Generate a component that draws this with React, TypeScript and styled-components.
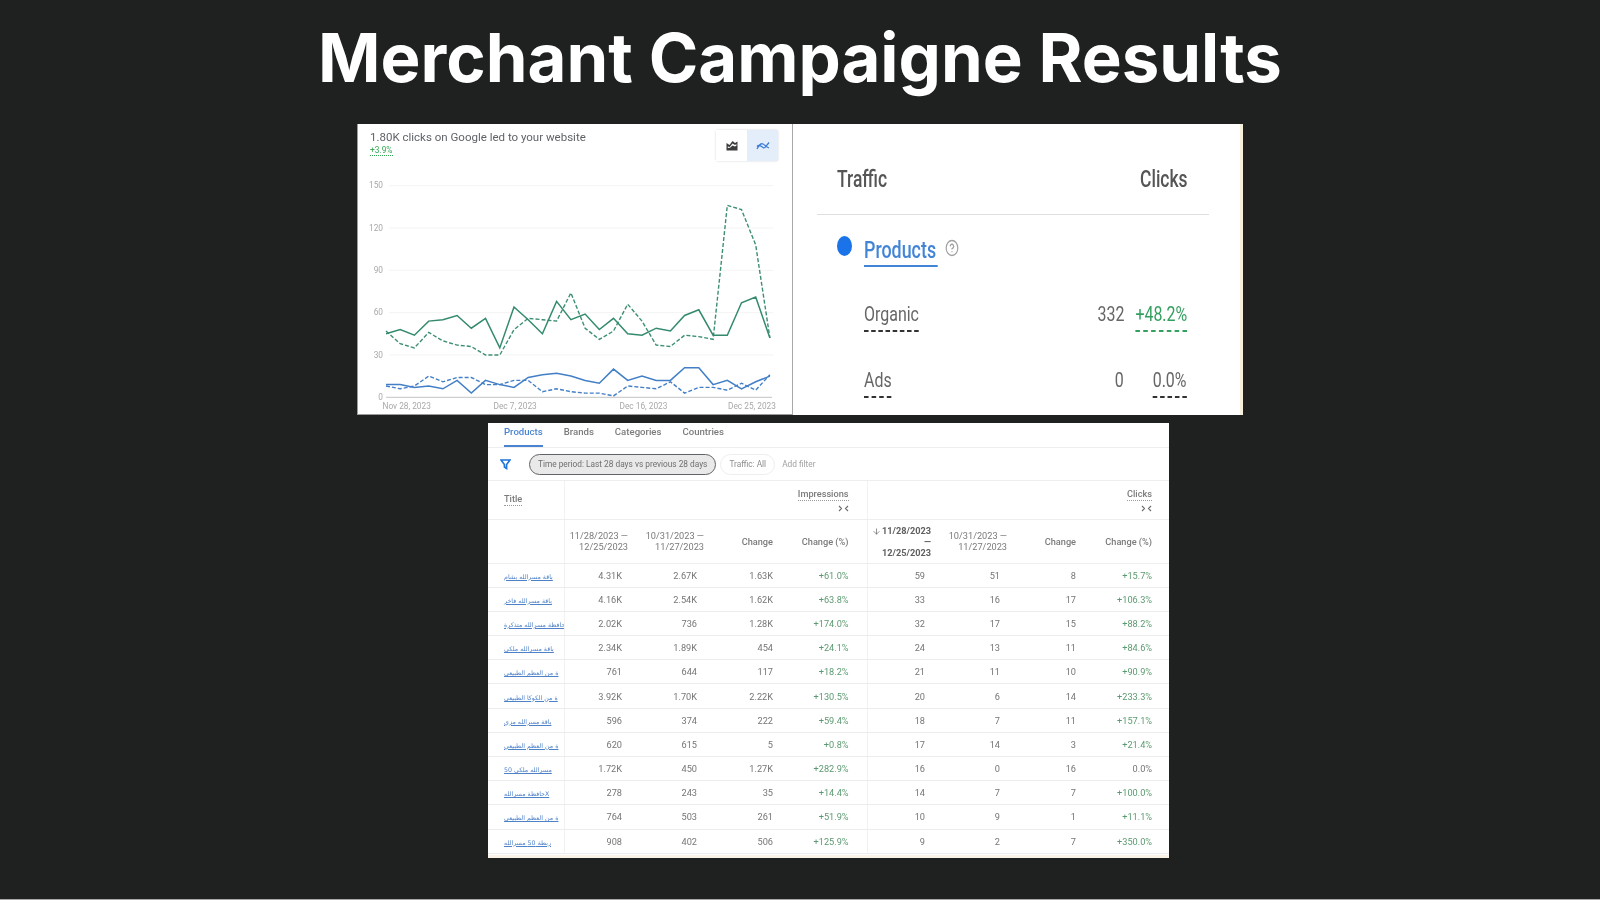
import styled, { createGlobalStyle } from "styled-components"
import { ArrowDown, CircleHelp } from "lucide-react"

const GlobalStyle = createGlobalStyle`
  html, body {
    margin: 0;
    padding: 0;
    background: #1f2121;
  }
`

const Page = styled.div`
  width: 1600px;
  height: 900px;
  box-sizing: border-box;
  overflow: hidden;
  display: flex;
  flex-direction: column;
  align-items: center;
  background: #1f2121;
  border-bottom: 1px solid #a9a9a9;
  font-family: Roboto, "Liberation Sans", sans-serif;
`

const Heading = styled.h1`
  margin: 0;
  height: 124px;
  line-height: 116px;
  font-family: Inter, "Liberation Sans", sans-serif;
  font-size: 67.100px;
  font-weight: 700;
  color: #ffffff;
  white-space: nowrap;
`

const TopRow = styled.div`
  display: flex;
  width: 886px;
  height: 291px;
  flex: none;
  filter: blur(0.35px);
`

const ChartPanel = styled.section`
  width: 436px;
  flex: none;
  box-sizing: border-box;
  background: #ffffff;
  border-left: 1px solid #9b9b9b;
  border-right: 1px solid #a8a8a8;
  border-bottom: 1px solid #9b9b9b;
  display: flex;
  flex-direction: column;
`

const ChartHeader = styled.header`
  height: 42px;
  box-sizing: border-box;
  flex: none;
  display: flex;
  justify-content: space-between;
  padding: 6px 14px 0 12px;
`

const ChartTitle = styled.div`
  font-size: 11.500px;
  line-height: 14px;
  color: #5f6368;
  white-space: nowrap;
`

const ChartDelta = styled.span`
  display: block;
  width: fit-content;
  margin-top: 1px;
  font-size: 8.400px;
  line-height: 10px;
  color: #34a853;
  border-bottom: 1px dotted #34a853;
`

const Toggle = styled.div`
  display: flex;
  height: 31px;
  border-radius: 2px;
  box-shadow: 0 0 2px rgba(0, 0, 0, 0.22);
`

const ToggleCell = styled.div<{ $active?: boolean }>`
  width: 31px;
  display: flex;
  align-items: center;
  justify-content: center;
  background: ${(props) => (props.$active ? "#e4eefa" : "#ffffff")};
`

const ChartSvg = styled.svg`
  display: block;
  flex: none;
`

const AxisLabel = styled.text`
  font-family: Roboto, "Liberation Sans", sans-serif;
  font-size: 8.300px;
  fill: #a8a8a8;
`

const TrafficPanel = styled.section`
  width: 450px;
  flex: none;
  box-sizing: border-box;
  overflow: hidden;
  background: #ffffff;
  border-right: 3px solid #f6f0dc;
  padding: 36px 31px 0 24px;
`

const Squeezed = styled.span<{ $right?: boolean }>`
  display: inline-block;
  margin-left: ${(props) => (props.$right ? "-30px" : "0")};
  transform: scaleX(0.76);
  transform-origin: ${(props) => (props.$right ? "right" : "left")} center;
  white-space: nowrap;
`

const TrafficHead = styled.div`
  display: flex;
  justify-content: space-between;
  height: 55px;
  box-sizing: border-box;
  padding: 6px 21px 0 20px;
  border-bottom: 1px solid #dfdfdf;
  font-size: 23px;
  line-height: 27px;
  font-weight: 500;
  color: #555555;
`

const ProductRow = styled.div`
  display: flex;
  align-items: flex-start;
  height: 66px;
  padding: 20px 0 0 20px;
`

const Dot = styled.span`
  flex: none;
  width: 15px;
  height: 20px;
  margin-top: 1px;
  border-radius: 50%;
  background: #1a73e8;
`

const ProductLink = styled(Squeezed)`
  margin: 2px 0 0 12px;
  width: 97px;
  font-size: 23.500px;
  line-height: 27px;
  font-weight: 500;
  color: #4285d6;
  border-bottom: 2px solid #4285d6;
  padding-bottom: 1px;
`

const HelpIcon = styled(CircleHelp)`
  margin: 4px 0 0 -16px;
  color: #a0a0a0;
`

const TrafficRow = styled.div`
  display: grid;
  grid-template-columns: 1fr 64px 63px;
  height: 66px;
  padding: 0 22px 0 47px;
  font-size: 21px;
  line-height: 27px;
  color: #666666;
`

const ValueCell = styled.div<{ $green?: boolean }>`
  text-align: right;
  color: ${(props) => (props.$green ? "#34a060" : "#666666")};
`

const Dashed = styled(Squeezed)<{ $green?: boolean }>`
  border-bottom: 2px dashed ${(props) => (props.$green ? "#34a060" : "#333333")};
  padding-bottom: 2px;
`

const TablePanel = styled.section`
  width: 681px;
  height: 435px;
  flex: none;
  align-self: flex-start;
  margin: 8px 0 0 488px;
  box-sizing: border-box;
  overflow: hidden;
  background: #ffffff;
  border-bottom: 3px solid #fcf3e8;
  filter: blur(0.35px);
`

const Tabs = styled.nav`
  height: 24px;
  display: flex;
  gap: 21px;
  padding-left: 16px;
  border-bottom: 1px solid #eeeeee;
`

const Tab = styled.span<{ $active?: boolean }>`
  font-size: 9.600px;
  font-weight: 500;
  line-height: 18px;
  color: ${(props) => (props.$active ? "#4a84d0" : "#7b7b7b")};
  box-shadow: ${(props) => (props.$active ? "inset 0 -2px 0 #4a84d0" : "none")};
`

const FilterRow = styled.div`
  height: 32px;
  display: flex;
  align-items: center;
  padding-left: 12px;
  border-bottom: 1px solid #eeeeee;
  font-size: 8.300px;
  white-space: nowrap;
`

const Chip = styled.span<{ $selected?: boolean }>`
  box-sizing: border-box;
  height: 21px;
  line-height: 19px;
  margin-right: 4px;
  padding: 0 8px;
  border-radius: 11px;
  border: 1px solid ${(props) => (props.$selected ? "#5f6368" : "#eeeeee")};
  background: ${(props) => (props.$selected ? "#e9e9e9" : "#ffffff")};
  color: ${(props) => (props.$selected ? "#6f6f6f" : "#8c8c8c")};
`

const FunnelIcon = styled.svg`
  margin-right: 18px;
  flex: none;
`

const AddFilter = styled.span`
  margin-left: 3px;
  color: #a0a0a0;
`

const Table = styled.table`
  width: 681px;
  table-layout: fixed;
  border-collapse: collapse;
  font-size: 9.200px;
  color: #757575;
`

const HeadCell = styled.th<{ $pad?: number; $divider?: boolean; $dark?: boolean }>`
  position: relative;
  box-sizing: border-box;
  padding: 0 ${(props) => props.$pad ?? 0}px 0 0;
  text-align: right;
  font-weight: ${(props) => (props.$dark ? 700 : 500)};
  line-height: 11px;
  color: ${(props) => (props.$dark ? "#5f5f5f" : "#7a7a7a")};
  border-bottom: 1px solid #eeeeee;
  border-left: ${(props) => (props.$divider ? "1px solid #f1f1f1" : "none")};
  white-space: nowrap;
`

const TitleHead = styled(HeadCell)`
  padding-left: 16px;
  text-align: left;
  border-left: none;
`

const DateCell = styled(HeadCell)`
  font-weight: 400;
`

const GroupRow = styled.tr`
  height: 38px;
`

const ColumnRow = styled.tr`
  height: 44px;
`

const BodyRow = styled.tr`
  height: 24.200px;
`

const DataCell = styled.td<{ $pad?: number; $divider?: boolean; $green?: boolean }>`
  box-sizing: border-box;
  padding: 0 ${(props) => props.$pad ?? 0}px 0 0;
  text-align: right;
  line-height: 11px;
  color: ${(props) => (props.$green ? "#5b9a70" : "#757575")};
  border-bottom: 1px solid #ececec;
  border-left: ${(props) => (props.$divider ? "1px solid #f1f1f1" : "none")};
  white-space: nowrap;
`

const TitleCell = styled.td`
  box-sizing: border-box;
  padding: 0 0 0 16px;
  border-bottom: 1px solid #ececec;
  overflow: hidden;
  white-space: nowrap;
`

const ProductName = styled.a`
  font-family: "DejaVu Sans", "Noto Sans", sans-serif;
  font-size: 6.300px;
  color: #4d82c8;
  text-decoration: underline;
`

const DottedLabel = styled.span`
  display: inline-block;
  line-height: 10px;
  padding-bottom: 1px;
  border-bottom: 1px dotted #9a9a9a;
`

const Collapse = styled.svg`
  display: block;
  margin: 4px 0 0 auto;
`

const SortArrow = styled(ArrowDown)`
  position: absolute;
  left: 4px;
  top: 7px;
  color: #6f6f6f;
`

const greenSolid = [45, 48, 44, 54, 55, 58, 49, 56, 35, 64, 55, 45, 68, 55, 59, 48, 56, 45, 44, 49, 47, 58, 62, 44, 44, 67, 71, 42]
const greenDashed = [47, 38, 35, 46, 40, 37, 36, 30, 30, 48, 56, 55, 54, 74, 49, 41, 47, 66, 54, 37, 36, 44, 43, 41, 136, 133, 108, 42]
const blueSolid = [9, 9, 7, 8, 6, 12, 3, 12, 9, 7, 14, 16, 17, 15, 12, 10, 20, 12, 15, 12, 12, 21, 21, 9, 12, 6, 11, 15]
const blueDashed = [8, 6, 8, 15, 11, 14, 14, 9, 9, 12, 12, 4, 6, 4, 3, 3, 1, 8, 7, 6, 11, 3, 7, 7, 5, 10, 5, 16]

const toPoints = (values: number[]) =>
  values.map((v, i) => `${(28 + i * 14.22).toFixed(1)},${(231.3 - v * 1.411).toFixed(1)}`).join(" ")

const rows = [
  ["باقة مسرالله بشام", "4.31K", "2.67K", "1.63K", "+61.0%", "59", "51", "8", "+15.7%"],
  ["باقة مسرالله فاخر", "4.16K", "2.54K", "1.62K", "+63.8%", "33", "16", "17", "+106.3%"],
  ["حافظة مسرالله متذكرة", "2.02K", "736", "1.28K", "+174.0%", "32", "17", "15", "+88.2%"],
  ["باقة مسرالله ملكي", "2.34K", "1.89K", "454", "+24.1%", "24", "13", "11", "+84.6%"],
  ["ة من العظم الطبيعي", "761", "644", "117", "+18.2%", "21", "11", "10", "+90.9%"],
  ["ة من الكوكا الطبيعي", "3.92K", "1.70K", "2.22K", "+130.5%", "20", "6", "14", "+233.3%"],
  ["باقة مسرالله مزي", "596", "374", "222", "+59.4%", "18", "7", "11", "+157.1%"],
  ["ة من العظم الطبيعي", "620", "615", "5", "+0.8%", "17", "14", "3", "+21.4%"],
  ["مسرالله ملكي 50", "1.72K", "450", "1.27K", "+282.9%", "16", "0", "16", "0.0%"],
  ["حافظة مسراللهX", "278", "243", "35", "+14.4%", "14", "7", "7", "+100.0%"],
  ["ة من العظم الطبيعي", "764", "503", "261", "+51.9%", "10", "9", "1", "+11.1%"],
  ["ربطة 50 مسرالله", "908", "402", "506", "+125.9%", "9", "2", "7", "+350.0%"],
]

const columnWidths = [76, 64, 76, 69, 94, 64, 76, 69, 93]
const columnPads = [0, 6, 7, 0, 18, 6, 7, 0, 17]

const CollapseIcon = () => (
  <Collapse width="11" height="7" viewBox="0 0 11 7" fill="none" stroke="#6a6a6a" strokeWidth="1.1">
    <path d="M1 1l2.5 2.5L1 6M10 1L7.5 3.5 10 6" />
  </Collapse>
)

const App = () => (
  <Page>
    <GlobalStyle />
    <Heading>Merchant Campaigne Results</Heading>
    <TopRow>
      <ChartPanel>
        <ChartHeader>
          <ChartTitle>
            1.80K clicks on Google led to your website
            <ChartDelta>+3.9%</ChartDelta>
          </ChartTitle>
          <Toggle>
            <ToggleCell>
              <svg width="12" height="11" viewBox="0 0 12 11" fill="#3c3c3c">
                <path d="M0.500 10.500V3L3.500 5 6.500 1 9 3 11.500 1.500V10.500ZM1.800 6.400L3.800 7 6.500 3.400 9 5 10.400 4V5.800L8.800 6.600 6.600 5.400 4 7.800 1.800 8Z" fillRule="evenodd" />
              </svg>
            </ToggleCell>
            <ToggleCell $active>
              <svg width="14" height="10" viewBox="0 0 14 10" fill="none" stroke="#3d7fd6" strokeWidth="1.3">
                <path d="M1 8C3 4 5 2 7 3S10 6 13 7M1 5.500C3 3 5 5 7 6.500S10 5 13 1.500" />
              </svg>
            </ToggleCell>
          </Toggle>
        </ChartHeader>
        <ChartSvg width="434" height="248" viewBox="0 0 434 248">
          {[150, 120, 90, 60, 30].map((tick) => (
            <g key={tick}>
              <line x1="31" x2="415" y1={231.3 - tick * 1.411} y2={231.3 - tick * 1.411} stroke="#f4f4f4" />
              <AxisLabel x="25" y={234 - tick * 1.411} textAnchor="end">{tick}</AxisLabel>
            </g>
          ))}
          <AxisLabel x="25" y="234" textAnchor="end">0</AxisLabel>
          <line x1="28" x2="414" y1="231.300" y2="231.300" stroke="#c4c4c4" />
          <polyline points={toPoints(greenDashed)} fill="none" stroke="#3c8f74" strokeWidth="1.4" strokeDasharray="4 2" />
          <polyline points={toPoints(blueDashed)} fill="none" stroke="#437fc6" strokeWidth="1.4" strokeDasharray="4 2" />
          <polyline points={toPoints(greenSolid)} fill="none" stroke="#338a6f" strokeWidth="1.5" />
          <polyline points={toPoints(blueSolid)} fill="none" stroke="#437fc6" strokeWidth="1.5" />
          <AxisLabel x="24.500" y="243">Nov 28, 2023</AxisLabel>
          <AxisLabel x="135.500" y="243">Dec 7, 2023</AxisLabel>
          <AxisLabel x="261.500" y="243">Dec 16, 2023</AxisLabel>
          <AxisLabel x="370" y="243">Dec 25, 2023</AxisLabel>
        </ChartSvg>
      </ChartPanel>
      <TrafficPanel>
        <TrafficHead>
          <Squeezed>Traffic</Squeezed>
          <Squeezed $right>Clicks</Squeezed>
        </TrafficHead>
        <ProductRow>
          <Dot />
          <ProductLink>Products</ProductLink>
          <HelpIcon size={14} height={18} strokeWidth={2} preserveAspectRatio="none" />
        </ProductRow>
        <TrafficRow>
          <div><Dashed>Organic</Dashed></div>
          <ValueCell><Squeezed $right>332</Squeezed></ValueCell>
          <ValueCell $green><Dashed $right $green>+48.2%</Dashed></ValueCell>
        </TrafficRow>
        <TrafficRow>
          <div><Dashed>Ads</Dashed></div>
          <ValueCell><Squeezed $right>0</Squeezed></ValueCell>
          <ValueCell><Dashed $right>0.0%</Dashed></ValueCell>
        </TrafficRow>
      </TrafficPanel>
    </TopRow>
    <TablePanel>
      <Tabs>
        <Tab $active>Products</Tab>
        <Tab>Brands</Tab>
        <Tab>Categories</Tab>
        <Tab>Countries</Tab>
      </Tabs>
      <FilterRow>
        <FunnelIcon width="11" height="11" viewBox="0 0 11 11" fill="none" stroke="#1f74d8" strokeWidth="1.6">
          <path d="M1 1h9L6.600 5.500V9.500L4.400 8V5.500Z" />
        </FunnelIcon>
        <Chip $selected>Time period: Last 28 days vs previous 28 days</Chip>
        <Chip>Traffic: All</Chip>
        <AddFilter>Add filter</AddFilter>
      </FilterRow>
      <Table>
        <colgroup>
          {columnWidths.map((width, i) => (
            <col key={i} width={width} />
          ))}
        </colgroup>
        <thead>
          <GroupRow>
            <TitleHead><DottedLabel>Title</DottedLabel></TitleHead>
            <HeadCell colSpan={4} $pad={18} $divider>
              <DottedLabel>Impressions</DottedLabel>
              <CollapseIcon />
            </HeadCell>
            <HeadCell colSpan={4} $pad={17} $divider>
              <DottedLabel>Clicks</DottedLabel>
              <CollapseIcon />
            </HeadCell>
          </GroupRow>
          <ColumnRow>
            <HeadCell />
            <DateCell $divider>11/28/2023 —<br />12/25/2023</DateCell>
            <DateCell>10/31/2023 —<br />11/27/2023</DateCell>
            <HeadCell>Change</HeadCell>
            <HeadCell $pad={18}>Change (%)</HeadCell>
            <HeadCell $divider $dark>
              <SortArrow size={9} strokeWidth={2} />
              11/28/2023<br />—<br />12/25/2023
            </HeadCell>
            <DateCell>10/31/2023 —<br />11/27/2023</DateCell>
            <HeadCell>Change</HeadCell>
            <HeadCell $pad={17}>Change (%)</HeadCell>
          </ColumnRow>
        </thead>
        <tbody>
          {rows.map((row, r) => (
            <BodyRow key={r}>
              <TitleCell><ProductName>{row[0]}</ProductName></TitleCell>
              {row.slice(1).map((value, c) => (
                <DataCell
                  key={c}
                  $pad={columnPads[c + 1]}
                  $divider={c === 0 || c === 4}
                  $green={(c === 3 || c === 7) && value.startsWith("+")}
                >
                  {value}
                </DataCell>
              ))}
            </BodyRow>
          ))}
        </tbody>
      </Table>
    </TablePanel>
  </Page>
)

export default App
